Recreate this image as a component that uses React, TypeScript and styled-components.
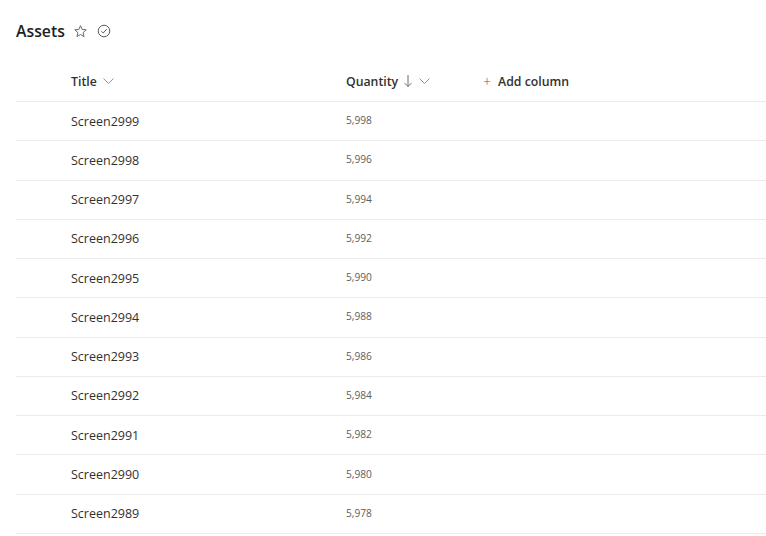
import styled, { createGlobalStyle } from 'styled-components';

const GlobalStyle = createGlobalStyle`
  body {
    margin: 0;
    background: #ffffff;
    font-family: 'Open Sans', 'Noto Sans', sans-serif;
    color: #323130;
  }
`;

const Page = styled.div`
  padding: 16px 0 0 16px;
  width: 766px;
  box-sizing: border-box;
`;

const Header = styled.div`
  display: flex;
  align-items: center;
  gap: 6px;
  height: 30px;
`;

const PageTitle = styled.h1`
  margin: 0;
  font-size: 15.8px;
  font-weight: 600;
  color: #201f1e;
`;

const IconBtn = styled.span<{ $gap?: number }>`
  display: inline-flex;
  align-items: center;
  justify-content: center;
  width: 16px;
  height: 16px;
  color: #605e5c;
  margin-left: ${p => (p.$gap ? `${p.$gap}px` : '0')};
`;

const Table = styled.div`
  margin-top: 15px;
`;

const Row = styled.div<{ $head?: boolean }>`
  display: grid;
  grid-template-columns: 55px 275px 137px 1fr;
  align-items: center;
  height: ${p => (p.$head ? '41px' : '39.27px')};
  box-sizing: border-box;
  border-bottom: 1px solid #edebe9;
`;

const HeadCell = styled.div`
  display: flex;
  align-items: center;
  gap: 5px;
  font-size: 12.3px;
  font-weight: 600;
  color: #323130;
`;

const Chevron = () => (
  <svg width='13' height='12' viewBox='0 0 13 12' fill='none'>
    <path d='M1.5 3.5l5 5 5-5' stroke='#8a8886' strokeWidth='0.9' />
  </svg>
);

const Arrow = () => (
  <svg width='10' height='14' viewBox='0 0 10 14' fill='none'>
    <path d='M5 1v11.5M1.5 9l3.5 3.5L8.5 9' stroke='#605e5c' strokeWidth='0.9' />
  </svg>
);

const Plus = styled.span`
  font-weight: 300;
  font-size: 14px;
  color: #605e5c;
  margin-right: 2px;
`;

const TitleCell = styled.div`
  font-size: 12.5px;
  color: #323130;
`;

const QtyCell = styled.div`
  font-size: 10.2px;
  color: #605e5c;
  margin-top: -2px;
`;

const rows = Array.from({ length: 11 }, (_d, i) => ({
  title: `Screen${2999 - i}`,
  qty: 5998 - i * 2,
}));

export default function App() {
  return (
    <Page>
      <GlobalStyle />
      <Header>
        <PageTitle>Assets</PageTitle>
        <IconBtn $gap={2}>
          <svg width='15' height='15' viewBox='0 0 16 16' fill='none'>
            <path
              d='M8 1.8l1.8 4 4.3.4-3.3 2.9 1 4.3L8 11.2l-3.8 2.2 1-4.3-3.3-2.9 4.3-.4z'
              stroke='#605e5c'
              strokeWidth='1'
              strokeLinejoin='round'
            />
          </svg>
        </IconBtn>
        <IconBtn $gap={1}>
          <svg width='14' height='14' viewBox='0 0 14 14' fill='none'>
            <circle cx='7' cy='7' r='5.8' stroke='#605e5c' strokeWidth='1' />
            <path d='M4.4 7.3l1.8 1.7 3.5-3.8' stroke='#605e5c' strokeWidth='1' />
          </svg>
        </IconBtn>
      </Header>
      <Table>
        <Row $head>
          <div />
          <HeadCell>
            Title <Chevron />
          </HeadCell>
          <HeadCell>
            Quantity <Arrow /> <Chevron />
          </HeadCell>
          <HeadCell>
            <Plus>+</Plus> Add column
          </HeadCell>
        </Row>
        {rows.map(r => (
          <Row key={r.title}>
            <div />
            <TitleCell>{r.title}</TitleCell>
            <QtyCell>{r.qty.toLocaleString('en-US')}</QtyCell>
            <div />
          </Row>
        ))}
      </Table>
    </Page>
  );
}
